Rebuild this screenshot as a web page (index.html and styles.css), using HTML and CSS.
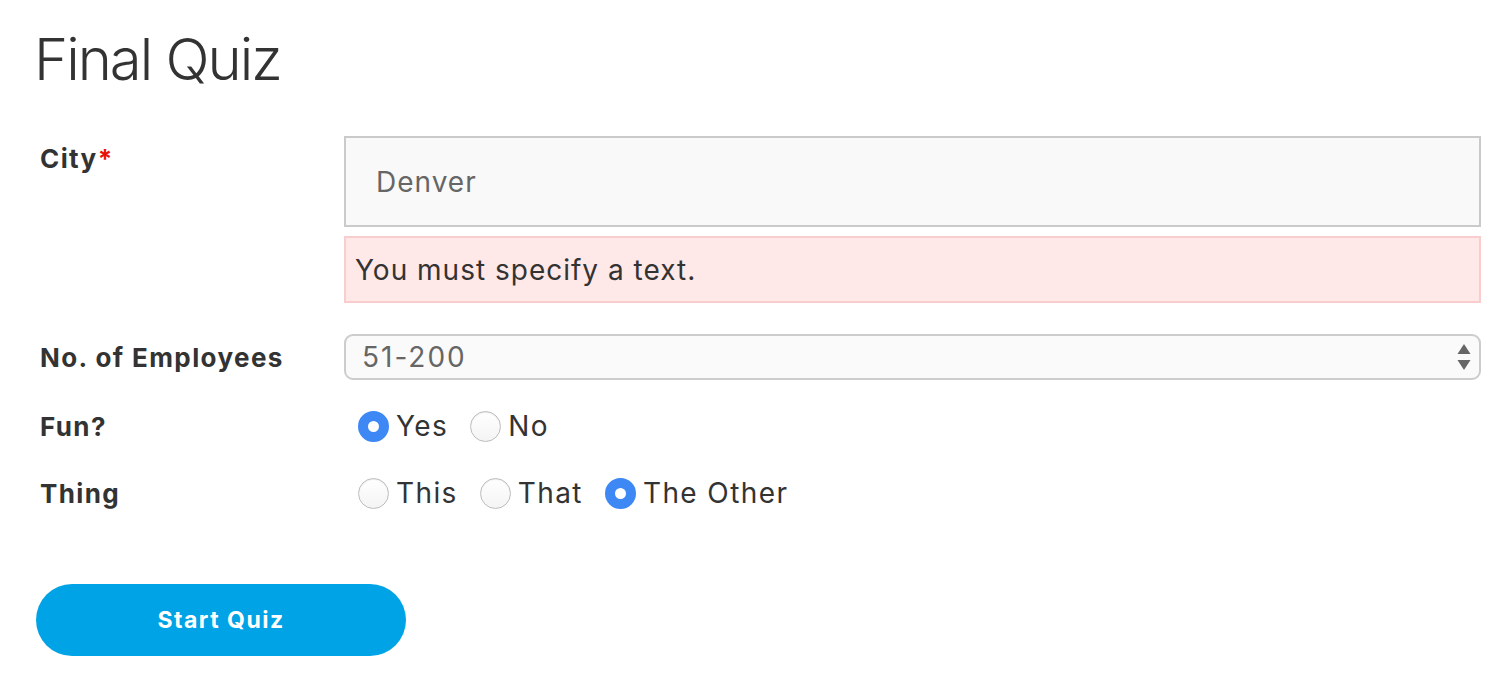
FILE: index.html
```html
<!DOCTYPE html>
<html lang="en">
<head>
    <meta charset="UTF-8">
    <meta name="viewport" content="width=device-width, initial-scale=1.0">
    <title>Final Quiz</title>
    <link rel="stylesheet" href="styles.css">
</head>
<body>
    <div class="page">
        <h1>Final Quiz</h1>
        <form class="quiz-form" onsubmit="return false;">
            <div class="row row-city">
                <label class="field-label" for="city">City<span class="required">*</span></label>
                <div class="field">
                    <input id="city" class="text-input" type="text" value="Denver">
                    <div class="error-box">You must specify a text.</div>
                </div>
            </div>
            <div class="row row-select">
                <label class="field-label" for="employees">No. of Employees</label>
                <div class="field select-wrap">
                    <select id="employees" class="select-input">
                        <option>1-50</option>
                        <option selected>51-200</option>
                        <option>201-1000</option>
                    </select>
                    <svg class="select-arrows" width="14" height="30" viewBox="0 0 14 30">
                        <path d="M7 2 L13.5 12 L0.5 12 Z" fill="#666"/>
                        <path d="M7 28 L13.5 18 L0.5 18 Z" fill="#666"/>
                    </svg>
                </div>
            </div>
            <div class="row row-radio">
                <span class="field-label">Fun?</span>
                <div class="field radio-group">
                    <label class="radio"><input type="radio" name="fun" checked><span>Yes</span></label>
                    <label class="radio"><input type="radio" name="fun"><span>No</span></label>
                </div>
            </div>
            <div class="row row-radio">
                <span class="field-label">Thing</span>
                <div class="field radio-group">
                    <label class="radio"><input type="radio" name="thing"><span>This</span></label>
                    <label class="radio"><input type="radio" name="thing"><span>That</span></label>
                    <label class="radio"><input type="radio" name="thing" checked><span>The Other</span></label>
                </div>
            </div>
            <button class="start-btn" type="submit">Start Quiz</button>
        </form>
    </div>
</body>
</html>
```

FILE: styles.css
```css
body {
    margin: 0;
    padding: 0;
    background-color: #ffffff;
    color: #333333;
    font-family: Inter, "Noto Sans", Arial, sans-serif;
}
.page {
    padding: 22px 27px 0 36px;
}
h1 {
    margin: 0 0 0 -2px;
    font-size: 58px;
    font-weight: 300;
    line-height: 74px;
    letter-spacing: -2px;
    color: #333333;
}
.quiz-form {
    margin-top: 40px;
    display: flex;
    flex-direction: column;
}
.row {
    display: grid;
    grid-template-columns: 308px 1fr;
}
.field-label {
    padding-left: 4px;
    font-size: 26px;
    font-weight: 700;
    letter-spacing: 1.4px;
    color: #333333;
}
.required {
    color: #e8120c;
}
.row-city .field-label {
    padding-top: 7px;
}
.text-input {
    display: block;
    box-sizing: border-box;
    width: 100%;
    height: 91px;
    padding: 0 30px;
    border: 2px solid #cacaca;
    background-color: #f9f9f9;
    font-family: inherit;
    font-size: 28px;
    letter-spacing: 1px;
    color: #666666;
    outline: none;
}
.error-box {
    box-sizing: border-box;
    margin-top: 9px;
    height: 67px;
    padding: 0 9px;
    display: flex;
    align-items: center;
    background-color: #ffe8e8;
    border: 2px solid #f9cdcd;
    font-size: 28px;
    letter-spacing: 1px;
    color: #333333;
}
.row-select {
    margin-top: 31px;
    align-items: center;
}
.select-wrap {
    position: relative;
}
.select-input {
    display: block;
    box-sizing: border-box;
    width: 100%;
    height: 46px;
    padding: 0 16px;
    border: 2px solid #cccccc;
    border-radius: 9px;
    background-color: #fafafa;
    font-family: inherit;
    font-size: 28px;
    letter-spacing: 2px;
    color: #666666;
    appearance: none;
    -webkit-appearance: none;
    outline: none;
}
.select-arrows {
    position: absolute;
    right: 10px;
    top: 8px;
}
.row-radio {
    align-items: center;
    height: 68px;
}
.row-radio + .row-radio {
    height: 66px;
}
.row-select + .row-radio {
    margin-top: 12px;
}
.radio-group {
    display: flex;
    align-items: center;
    padding-left: 14px;
    gap: 22px;
}
.radio {
    display: flex;
    align-items: center;
    gap: 7px;
    font-size: 28px;
    letter-spacing: 1.4px;
    color: #333333;
}
.radio input {
    appearance: none;
    -webkit-appearance: none;
    box-sizing: border-box;
    width: 31px;
    height: 31px;
    margin: 0;
    border-radius: 50%;
    border: 1px solid #bdbdbd;
    background: linear-gradient(#ffffff, #f4f4f4);
    box-shadow: inset 0 1px 1px rgba(0, 0, 0, 0.08);
}
.radio input:checked {
    border: 10px solid #3d88f4;
    background: #ffffff;
    box-shadow: none;
}
.start-btn {
    margin-top: 58px;
    width: 370px;
    height: 72px;
    border: none;
    border-radius: 36px;
    background-color: #00a3e5;
    color: #ffffff;
    font-family: inherit;
    font-size: 23px;
    font-weight: 700;
    letter-spacing: 1.5px;
    cursor: pointer;
}
```
